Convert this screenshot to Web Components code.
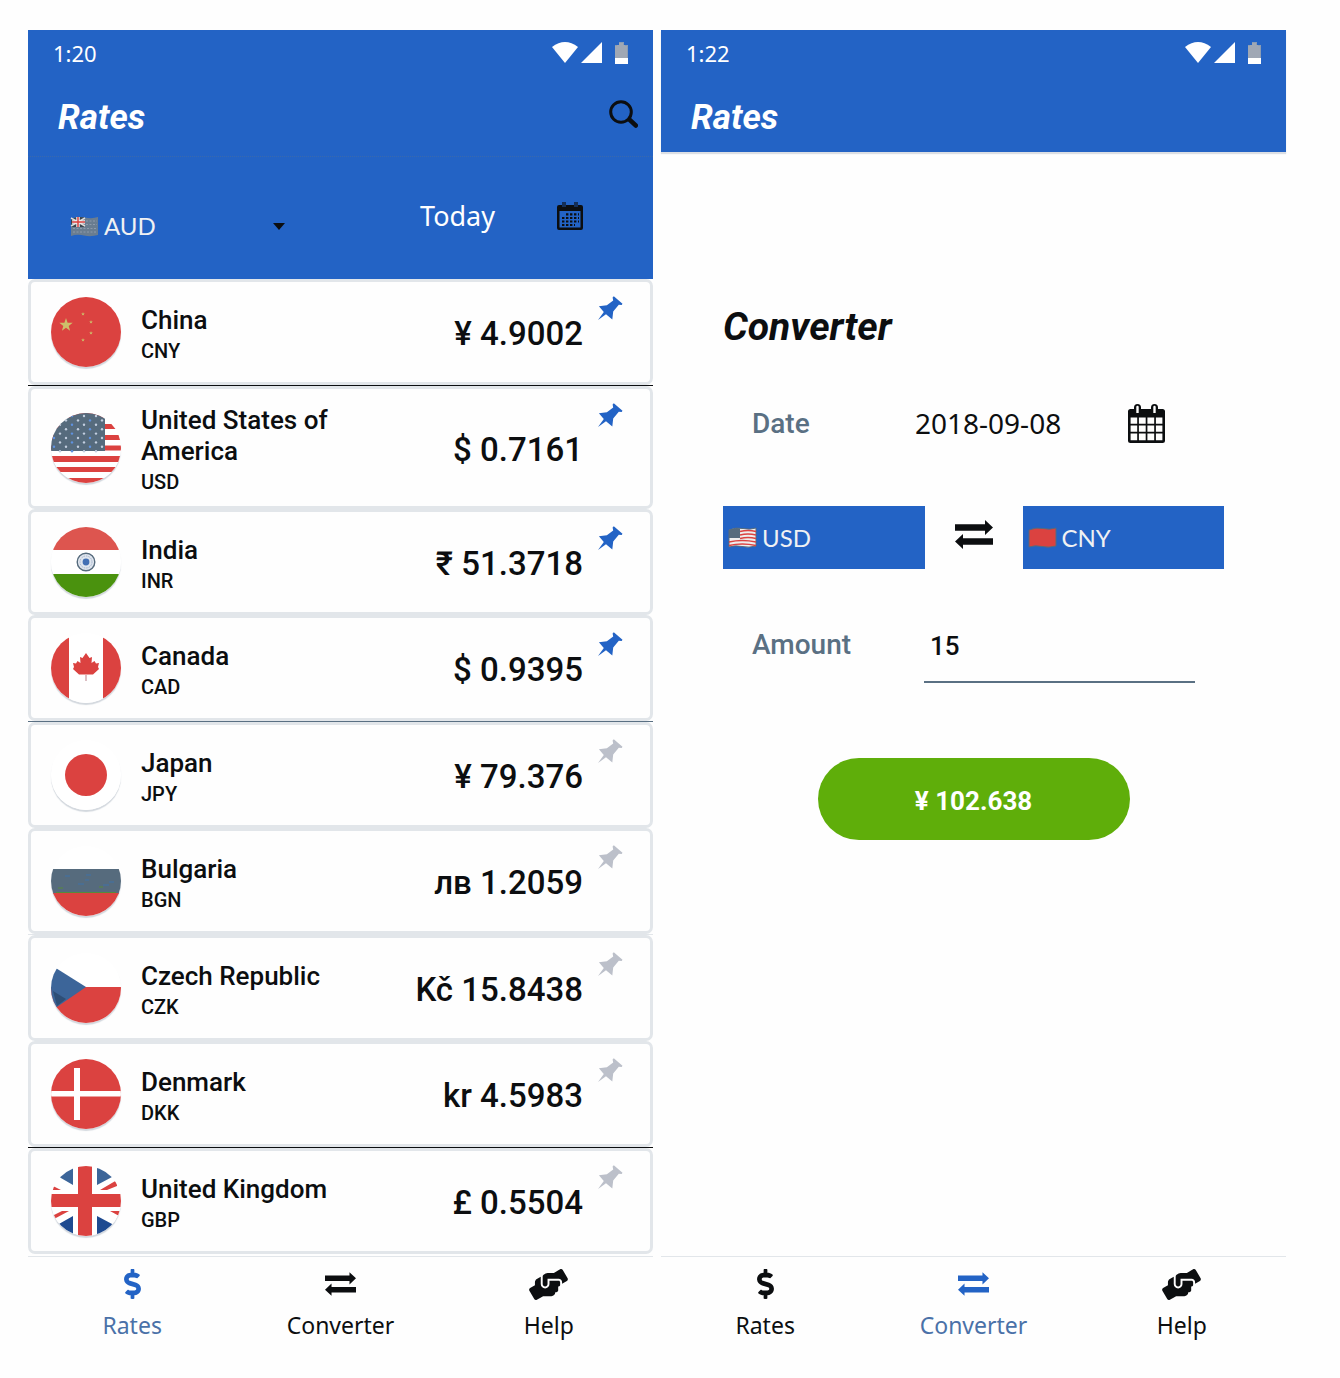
<!DOCTYPE html>
<html lang="en">
<head>
<meta charset="utf-8">
<meta name="viewport" content="width=device-width, initial-scale=1">
<title>Rates</title>
<style>
:root {
  --blue: #2363c5;
  --ink: #0c0e10;
  --slate: #5a7083;
  --line: #e2e6ea;
  --red: #db4240;
  --green: #5fae0a;
}
body {
  margin: 0;
  padding: 30px 54px 28px 28px;
  background: #fefefe;
  color: var(--ink);
  font-family: Roboto, sans-serif;
}
</style>
</head>
<body>
<app-shell>
  <rates-screen></rates-screen>
  <converter-screen></converter-screen>
</app-shell>

<script>
const define = (name, render) => customElements.define(name, class extends HTMLElement {
  connectedCallback() {
    if (this.shadowRoot) return;
    const root = this.attachShadow({ mode: 'open' });
    const tpl = document.createElement('template');
    tpl.innerHTML = render(this);
    root.append(tpl.content.cloneNode(true));
  }
});

/* ---------- icons ---------- */
const ICONS = {
  search: [29, 29, '<circle cx="12" cy="12" r="10.3" fill="none" stroke="currentColor" stroke-width="3"/><path d="M19 19.5l2-2.5 7.3 6.8a2.2 2.2 0 0 1-3 3.4L17.5 20z" fill="currentColor"/>'],
  calendarSmall: [26, 28, '<path fill="currentColor" fill-rule="evenodd" d="M2 3h3V0h4v3h8V0h4v3h3q2 0 2 2v21q0 2-2 2H2q-2 0-2-2V5q0-2 2-2zM2.500 9v16.500h21V9z"/><path d="M6 0v5M8 0v5M18 0v5M20 0v5" stroke="#2363c5" stroke-width=".8"/><path d="M9 12.300h13M5 16h17M5 19.500h17M5 23h13" stroke="currentColor" stroke-width="2.200" stroke-dasharray="2.400 1.600"/>'],
  calendar: [37, 39, '<path fill="currentColor" fill-rule="evenodd" d="M2.500 5H6V3.500a3.500 3.500 0 0 1 7 0V5h10V3.500a3.500 3.500 0 0 1 7 0V5h4.500Q37 5 37 7.500v29q0 2.500-2.500 2.500h-32Q0 39 0 36.500v-29Q0 5 2.500 5zM8.300 3v6h2.400V3a1.200 1.200 0 0 0-2.400 0zM25.300 3v6h2.400V3a1.200 1.200 0 0 0-2.400 0zM2.600 13.500v6.200h6.600v-6.200zm8.300 0v6.200h6.800v-6.200zm8.500 0v6.200h6.800v-6.200zm8.500 0v6.200h6.500v-6.200zM2.600 21.400v6.400h6.600v-6.400zm8.300 0v6.400h6.800v-6.400zm8.500 0v6.400h6.800v-6.400zm8.500 0v6.400h6.500v-6.400zM2.600 29.500v6.700h6.600v-6.700zm8.300 0v6.700h6.800v-6.700zm8.500 0v6.700h6.800v-6.700zm8.500 0v6.700h6.500v-6.700z"/>'],
  pin: [25, 24, '<path fill="currentColor" d="M15.800.2l8.700 7.600-.8 1.100-2.900-.1-5.600 6.700-.9 8-6.300-5.200L0 24l5.800-7.900L.9 10.200l8-.9 6.300-4.900-.6-2.800z"/>'],
  swap: [38, 29, '<path fill="currentColor" d="M0 4.200h30V0l8 7.500-8 7.500v-4.200H0zM38 18.200H8V14l-8 7.500L8 29v-4.200h30z"/>'],
  dollar: [288, 512, '<path fill="currentColor" d="M209.200 233.400l-108-31.600C88.700 198.200 80 186.500 80 173.500c0-16.300 13.200-29.500 29.500-29.500h66.300c12.200 0 24.200 3.700 34.200 10.500 6.100 4.100 14.300 3.100 19.500-2l34.800-34c7.100-6.900 6.100-18.400-1.800-24.500C238 74.800 207.400 64.100 176 64V16c0-8.800-7.200-16-16-16h-32c-8.800 0-16 7.200-16 16v48h-2.500C45.800 64-5.400 118.700.5 183.600c4.200 46.100 39.400 83.600 83.800 96.600l102.500 30c12.500 3.700 21.200 15.300 21.200 28.300 0 16.300-13.200 29.500-29.500 29.500h-66.300C100 368 88 364.300 78 357.500c-6.100-4.100-14.300-3.100-19.500 2l-34.800 34c-7.100 6.900-6.100 18.400 1.800 24.500 24.500 19.200 55.100 29.900 86.500 30v48c0 8.800 7.200 16 16 16h32c8.800 0 16-7.200 16-16v-48.200c46.600-.9 90.300-28.600 105.700-72.700 21.500-61.600-14.600-124.800-72.500-141.700z"/>'],
  hands: [640, 512, '<path fill="currentColor" d="M488 192H336v56c0 39.700-32.300 72-72 72s-72-32.300-72-72V126.400l-64.900 39C107.800 176.900 96 197.800 96 220.200v47.300l-80 46.200C.7 322.500-4.600 342.100 4.300 357.400l80 138.600c8.800 15.300 28.400 20.500 43.700 11.700L231.400 448H368c35.300 0 64-28.700 64-64h16c17.700 0 32-14.300 32-32v-64h8c13.300 0 24-10.700 24-24v-48c0-13.300-10.700-24-24-24zm147.700-37.400L555.700 16C546.900.7 527.300-4.500 512 4.300L408.600 64H306.400c-12 0-23.700 3.400-33.900 9.700L239 94.600c-9.400 5.800-15 16.100-15 27.100V248c0 22.100 17.900 40 40 40s40-17.900 40-40v-88h184c30.900 0 56 25.100 56 56v28.500l80-46.200c15.300-8.900 20.500-28.400 11.700-43.700z"/>'],
  wifi: [26, 21, '<path fill="currentColor" d="M0 5Q13-5 26 5L13 21z"/>'],
  signal: [21, 21, '<path fill="currentColor" d="M21 0v21H0z"/>'],
  battery: [13, 22, '<path fill="#8a9cb4" d="M4 0h5v3h4v13H0V3h4z"/><path d="M1 4v12M3 3v13M5 1v15M7 1v15M9 3v13M11 4v12" stroke="#c0bab6" stroke-width=".8"/><path fill="currentColor" d="M0 16h13v6H0z"/>'],
  caret: [12, 7, '<path fill="currentColor" d="M0 0h12L6 7z"/>']
};
define('app-icon', el => {
  const [w, h, body] = ICONS[el.getAttribute('name')];
  const width = el.getAttribute('width') || w;
  return `<style>:host{display:inline-flex;flex:none}svg{display:block}</style>
  <svg width="${width}" height="${Math.round(width * h / w)}" viewBox="0 0 ${w} ${h}" aria-hidden="true">${body}</svg>`;
});

/* ---------- flags ---------- */
const R = '#db4240', S = '#566b7d', B = '#3c6599';
const stars = () => {
  let s = '';
  for (let y = 0; y < 9; y++) for (let x = 0; x < 9; x++)
    if ((x + y) % 2) s += `<circle cx="${3 + x * 6}" cy="${3 + y * 4.4}" r="1.2" fill="${x % 3 ? '#c3cfe0' : '#5f92e0'}"/>`;
  return s;
};
const star = (x, y, r) => {
  let p = [];
  for (let i = 0; i < 10; i++) {
    const a = Math.PI * i / 5 - Math.PI / 2, q = i % 2 ? r * 0.4 : r;
    p.push((x + q * Math.cos(a)).toFixed(1) + ',' + (y + q * Math.sin(a)).toFixed(1));
  }
  return `<polygon points="${p.join(' ')}"/>`;
};
const FLAGS = {
  cn: `<path fill="${R}" d="M0 0h70v70H0z"/><g fill="#cdbf6a">${star(15, 28, 7)}${star(32, 17, 2)}${star(40, 25, 2)}${star(40, 36, 2)}${star(32, 43, 2)}</g>`,
  us: `<path fill="#fff" d="M0 0h70v70H0z"/><path fill="${R}" d="M0 0h70v5H0zM0 11h70v5H0zM0 22h70v5H0zM0 32.500h70v5H0zM0 43h70v6H0zM0 54h70v5H0zM0 65h70v5H0z"/><path fill="${S}" d="M0 0h54v38H0z"/>${stars()}`,
  in: `<path fill="#fff" d="M0 0h70v70H0z"/><path fill="#dd554f" d="M0 0h70v23H0z"/><path fill="#4a920e" d="M0 47h70v23H0z"/><circle cx="35" cy="35" r="8.800" fill="#dfe5ee" stroke="${S}" stroke-width="1.400"/><circle cx="35" cy="35" r="6" fill="none" stroke="#a4b3cb" stroke-dasharray="1.500 1"/><circle cx="35" cy="35" r="3.400" fill="#426fb4"/>`,
  ca: `<path fill="#fff" d="M0 0h70v70H0z"/><path fill="${R}" d="M0 0h18v70H0zM52 0h18v70H52zM35 20l3.500 5 2.500-1-.5 6 3-2 1.500 2.500 3-.5-1 4 1 2-6 5.500H28L22 36l1-2-1-4 3 .5 1.500-2.500 3 2-.5-6 2.500 1z"/><path fill="#b9808a" d="M34.500 42h1v6h-1z"/>`,
  jp: `<path fill="#fff" d="M0 0h70v70H0z"/><circle cx="35" cy="35" r="21" fill="${R}"/>`,
  bg: `<path fill="#fff" d="M0 0h70v70H0z"/><path fill="${S}" d="M0 23h70v25H0z"/><path fill="${R}" d="M0 47h70v23H0z"/><path d="M14 30h5M27 38h6M34 34h4M52 39h6M58 36h5M35 29h5" stroke="#3f72a8"/><path d="M5 46.500h60M7 42h5M48 41h4" stroke="#568b3c"/>`,
  cz: `<path fill="#fff" d="M0 0h70v70H0z"/><path fill="${R}" d="M0 34h70v36H0z"/><path fill="${B}" d="M0 12l35 22L0 58z"/><path fill="#24405f" opacity=".6" d="M2 38l13 8-9 7z"/>`,
  dk: `<path fill="${R}" d="M0 0h70v70H0z"/><path fill="#fff" d="M0 32h70v5.500H0zM23 9h6v52h-6z"/>`,
  gb: `<path fill="#fff" d="M0 0h70v70H0z"/><path fill="${B}" d="M22 0v19L-4 4V-6zM46 0v19L74 4V-6z"/><path fill="#1e4a90" d="M22 70V50L-6 66v10zM46 70V50l30 16v10z"/><path fill="${R}" d="M0 19l10 5H0zM66 14v6l-10 4h-7zM3 53v-4l8-4h7zM70 51l-11-6h11z"/><path fill="${R}" d="M27 0h14v70H27zM0 28h70v13H0z"/>`
};
define('flag-icon', el => `
<style>
:host{display:block;flex:none;width:70px;height:70px;border-radius:50%;overflow:hidden;box-shadow:0 2px 1px #d3d8de}
svg{display:block}
</style>
<svg width="70" height="70" viewBox="0 0 70 70" role="img" aria-label="${el.getAttribute('code')} flag">${FLAGS[el.getAttribute('code')]}</svg>`);

const WAVE = 'M1 3Q8 0 15 1.500T28 1v18Q21 21 14 19.500T1 20z';
const MINI = {
  au: `<path fill="#6a7d90" d="${WAVE}"/><path d="M3 16h24M3 12.500h24M16 5h11M16 8.500h11" stroke="#8d9bab" stroke-dasharray="2 1.500"/><path fill="#3a434d" d="M1 3Q8 0 14 1.500V11H1z"/><path d="M1 2l14 8M15 2L1 10" stroke="#ddd" stroke-width="1.500"/><path d="M8 1v10M2 6h13" stroke="#eee" stroke-width="3.500"/><path d="M8 1v10M2 6h13" stroke="${R}" stroke-width="1.500"/>`,
  us: `<path fill="#eee" stroke="${S}" d="${WAVE}"/><path fill="none" stroke="${R}" stroke-width="1.500" d="M12 4.500q8-2 16 0M12 8q8-2 16 0M12 11.500q8-2 16 0M1 15q13-3 27 0M1 18.500q13-3 27 0"/><path fill="${S}" d="M1 3Q8 0 12 1.500V11H1z"/>`,
  cn: `<path fill="${R}" stroke="${S}" d="${WAVE}"/>`
};

/* ---------- currency drop-down ---------- */
define('currency-select', el => `
<style>
:host{display:flex;align-items:center;gap:5px;color:#f0f1f3}
svg{flex:none;display:block}
select{flex:1;min-width:0;height:100%;appearance:none;border:0;padding:0;background:none;color:inherit;font:400 24px/32px Lato,sans-serif}
app-icon{color:var(--ink)}
</style>
<svg width="29" height="21" viewBox="0 0 29 21" aria-hidden="true">${MINI[el.getAttribute('flag')]}</svg>
<select aria-label="${el.getAttribute('label')}"><option>${el.getAttribute('value')}</option></select>
${el.hasAttribute('caret') ? '<app-icon name="caret"></app-icon>' : ''}`);

/* ---------- header ---------- */
define('app-header', el => `
<style>
:host{display:block;background:var(--blue);color:#fff}
.status{display:flex;align-items:center;height:46px;padding:0 25px;font:22px/30px "Noto Sans",sans-serif}
.status span{flex:1}
.icons{display:flex;gap:3px}
.icons app-icon:last-child{margin-left:10px}
.title{display:flex;align-items:center;justify-content:space-between;height:76px;padding:0 15px 0 30px}
h1{margin:0;padding-top:8px;font:italic 700 35px/42px Roboto,sans-serif}
</style>
<div class="status"><span>${el.getAttribute('time')}</span>
  <div class="icons"><app-icon name="wifi"></app-icon><app-icon name="signal"></app-icon><app-icon name="battery"></app-icon></div></div>
<div class="title"><h1>Rates</h1><slot name="action"></slot></div>
<slot></slot>`);

/* ---------- card of one rate ---------- */
define('rate-card', el => `
<style>
:host{display:flex;box-sizing:border-box;align-items:center;min-height:106px;padding:8px 27px 8px 20px;border:3px solid var(--line);border-radius:7px;background:#fefefe}
.copy{flex:0 1 210px;margin:8px auto 0 20px}
h2,p{margin:0;font-weight:500;line-height:31px}
h2{font-size:26px}
p{font-size:20px}
.price{padding-top:4px;font-size:33px;font-weight:500;line-height:40px;white-space:nowrap}
button{align-self:flex-start;display:flex;margin:6px 0 0 15px;padding:0;border:0;background:none;color:#bcc0ca}
:host([pinned]) button{color:var(--blue)}
</style>
<flag-icon code="${el.getAttribute('flag')}"></flag-icon>
<div class="copy"><h2>${el.getAttribute('name')}</h2><p>${el.getAttribute('code')}</p></div>
<div class="price">${el.getAttribute('price')}</div>
<button type="button" aria-label="Pin ${el.getAttribute('code')}"><app-icon name="pin"></app-icon></button>`);

/* ---------- bottom tabs ---------- */
define('tab-bar', el => {
  const tabs = [['Rates', 'dollar', 17], ['Converter', 'swap', 31], ['Help', 'hands', 39]];
  return `
<style>
:host{display:block;margin-top:auto;border-top:1px solid var(--line)}
nav{display:grid;grid-template-columns:repeat(3,1fr)}
a{display:flex;flex-direction:column;align-items:center;gap:10px;padding:11px 0;color:var(--ink);text-decoration:none;font:23px/30px "Noto Sans",sans-serif}
a[aria-current]{color:var(--blue)}
a[aria-current] span{color:#4a71a8}
.glyph{display:flex;align-items:center;height:32px}
</style>
<nav>${tabs.map(([t, i, w]) => `<a href="#${t.toLowerCase()}"${t === el.getAttribute('current') ? ' aria-current="page"' : ''}><div class="glyph"><app-icon name="${i}" width="${w}"></app-icon></div><span>${t}</span></a>`).join('')}</nav>`;
});

/* ---------- screens ---------- */
const RATES = [
  ['cn', 'China', 'CNY', '¥ 4.9002', 1, 'var(--ink)'],
  ['us', 'United States of America', 'USD', '$ 0.7161', 1],
  ['in', 'India', 'INR', '₹ 51.3718', 1],
  ['ca', 'Canada', 'CAD', '$ 0.9395', 1, 'var(--slate)'],
  ['jp', 'Japan', 'JPY', '¥ 79.376', 0],
  ['bg', 'Bulgaria', 'BGN', 'лв 1.2059', 0, 'var(--line)'],
  ['cz', 'Czech Republic', 'CZK', 'Kč 15.8438', 0],
  ['dk', 'Denmark', 'DKK', 'kr 4.5983', 0, 'var(--ink)'],
  ['gb', 'United Kingdom', 'GBP', '£ 0.5504', 0]
];
define('rates-screen', () => `
<style>
:host{display:flex;flex-direction:column;min-width:0}
button{display:flex;padding:0;border:0;background:none;color:var(--ink)}
.filter{display:flex;align-items:center;box-sizing:border-box;margin-top:4px;height:123px;padding:0 70px 4px 42px;border-top:1px dotted #3a69ad}
currency-select{width:215px;padding-top:20px}
.day{margin-left:auto;font:27px/36px "Noto Sans",sans-serif}
.filter button{margin-left:62px}
hr{margin:0;border:0;height:1px}
tab-bar{margin-top:2px}
</style>
<app-header time="1:20">
  <button slot="action" type="button" aria-label="Search"><app-icon name="search"></app-icon></button>
  <div class="filter">
    <currency-select flag="au" value="AUD" label="Base currency" caret></currency-select>
    <span class="day">Today</span>
    <button type="button" aria-label="Pick a date"><app-icon name="calendarSmall"></app-icon></button>
  </div>
</app-header>
<main>${RATES.map(([f, n, c, p, pin, rule]) =>
  `<rate-card flag="${f}" name="${n}" code="${c}" price="${p}"${pin ? ' pinned' : ''}></rate-card>${rule ? `<hr style="background:${rule}">` : ''}`).join('')}</main>
<tab-bar current="Rates"></tab-bar>`);

define('converter-screen', () => `
<style>
:host{display:flex;flex-direction:column;min-width:0}
app-header{box-shadow:0 2px 1px #dcdfe4}
main{display:flex;flex-direction:column;padding:152px 62px 0}
h2{margin:0 0 53px;font:italic 700 39px/46px Roboto,sans-serif}
.row{display:flex;align-items:center;padding:0 29px}
label{flex:none;width:163px;color:var(--slate);font-size:28px;font-weight:500;line-height:36px}
.date label{padding-top:2px}
input{box-sizing:border-box;min-width:0;border:0;padding:0;background:none;color:inherit}
button{padding:0;border:0;background:none;color:var(--ink)}
#date{width:160px;height:40px;font:28px/40px "Noto Sans",sans-serif}
.row button{display:flex;margin:0 auto 0 53px}
.pair{display:grid;grid-template-columns:1fr auto 1fr;align-items:center;gap:30px;margin:63px 0 38px}
.pair button{display:flex;padding-bottom:6px}
currency-select{height:63px;padding:0 5px;background:var(--blue)}
.amount label{width:172px}
#amount{flex:1;height:76px;padding:4px 6px 0;border-bottom:2px solid var(--slate);font:500 26px/70px Roboto,sans-serif}
.result{align-self:center;box-sizing:border-box;width:312px;height:82px;margin-top:75px;padding-top:4px;border-radius:41px;background:var(--green);color:#fff;font:700 26px/78px Roboto,sans-serif}
</style>
<app-header time="1:22"></app-header>
<main>
  <h2>Converter</h2>
  <div class="row date"><label for="date">Date</label><input id="date" type="text" value="2018-09-08"><button type="button" aria-label="Pick a date"><app-icon name="calendar"></app-icon></button></div>
  <div class="pair">
    <currency-select flag="us" value="USD" label="From currency"></currency-select>
    <button type="button" aria-label="Swap currencies"><app-icon name="swap"></app-icon></button>
    <currency-select flag="cn" value="CNY" label="To currency"></currency-select>
  </div>
  <div class="row amount"><label for="amount">Amount</label><input id="amount" type="text" inputmode="decimal" value="15"></div>
  <button class="result" type="button">¥ 102.638</button>
</main>
<tab-bar current="Converter"></tab-bar>`);

define('app-shell', () => `
<style>
:host{display:grid;grid-template-columns:repeat(2,minmax(0,1fr));gap:8px}
</style>
<slot></slot>`);
</script>
</body>
</html>
